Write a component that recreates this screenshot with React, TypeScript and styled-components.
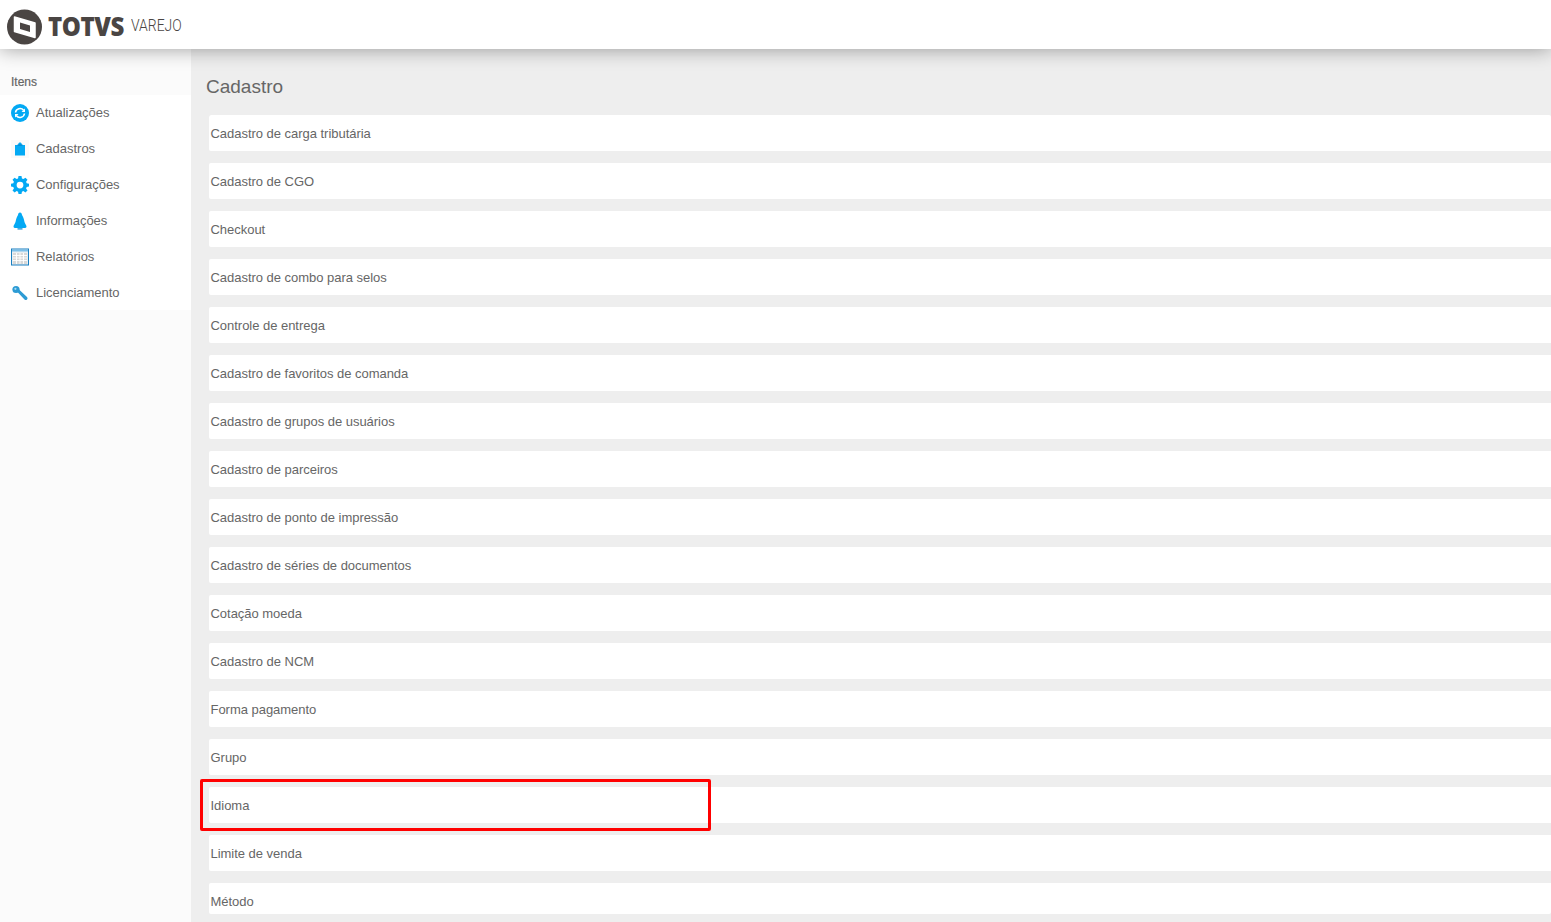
import React from "react";
import styled, { createGlobalStyle } from "styled-components";

const Global = createGlobalStyle`
  html, body { margin: 0; padding: 0; height: 100%; overflow: hidden; }
  body { font-family: "Liberation Sans", Arial, sans-serif; background: #fff; }
`;
const Page = styled.div`
  width: 1551px; height: 922px; display: flex; flex-direction: column; position: relative; overflow: hidden;
`;
const Header = styled.header`
  height: 49px; flex: none; background: #fff; display: flex; align-items: center; padding: 4px 0 0 6px; box-sizing: border-box; gap: 6px;
  box-shadow: 0 0 20px rgba(0,0,0,.38); position: relative; z-index: 2;
`;
const Brand = styled.span`
  font-family: "Open Sans", "Liberation Sans", sans-serif; font-weight: 800; font-size: 27px; letter-spacing: -0.5px; color: #4a4543; line-height: 1; transform: scaleX(.89); transform-origin: left; width: 77px; white-space: nowrap; margin-top: -3px;
`;
const Sub = styled.span`
  font-family: Roboto, "Liberation Sans", sans-serif; font-weight: 300; font-size: 17px; color: #4a4543; transform: scaleX(.82); transform-origin: left; margin-top: -3px;
`;
const Body = styled.div`
  flex: 1; display: flex; min-height: 0;
`;
const Side = styled.aside`
  width: 191px; flex: none; background: #fbfbfb; padding-top: 26px;
`;
const SideTitle = styled.div`
  font-size: 12px; color: #666; height: 20px; line-height: 14px; padding-left: 11px; -webkit-text-stroke: .2px #666;
`;
const SideList = styled.nav`
  background: #fff; height: 215px;
`;
const SideItem = styled.div`
  height: 36px; display: flex; align-items: center; padding-left: 11px; gap: 7px; font-size: 13px; color: #666; letter-spacing: -0.02px;
  & svg { width: 18px; height: 18px; flex: none; }
`;
const SideLabel = styled.span`
  margin-top: -2px;
`;
const Main = styled.main`
  flex: 1; background: #eee; padding: 24px 0 8px 18px; min-width: 0; overflow: hidden; display: flex; flex-direction: column;
`;
const Title = styled.h1`
  margin: 0 0 14px -3px; font-weight: 400; font-size: 19px; line-height: 28px; color: #666;
`;
const Rows = styled.div`
  display: flex; flex-direction: column; gap: 12px; flex: 1; min-height: 0; overflow: hidden; border-radius: 2px;
`;
const Row = styled.div`
  height: 36px; flex: none; background: #fff; border-radius: 2px 0 0 2px; display: flex; align-items: center; padding-left: 1.5px; font-size: 13px; color: #666; letter-spacing: -0.03px;
`;
const Highlight = styled.div`
  position: absolute; left: 200px; top: 779px; width: 511px; height: 52px; box-sizing: border-box; border: 3px solid #f00; border-radius: 2px; z-index: 3;
`;

const B = "#03a9f4";
const Logo = () => (
  <svg width="36" height="36" viewBox="0 0 36 36">
    <circle cx="18.500" cy="18" r="17.500" fill="#4a4543" />
    <path d="M8.500 8L29 14V28.500L8.500 22.500Z" fill="#fff" stroke="#fff" strokeWidth="1.500" strokeLinejoin="round" />
    <path d="M14 13.500L24 16.500V23L14 20Z" fill="#4a4543" />
  </svg>
);
const Refresh = () => (
  <svg viewBox="0 0 18 18">
    <circle cx="9" cy="9" r="9" fill={B} />
    <path d="M4.500 8.500A4.600 4.600 0 0 1 12.600 6.200" fill="none" stroke="#fff" strokeWidth="1.600" />
    <path d="M13.500 9.500A4.600 4.600 0 0 1 5.400 11.800" fill="none" stroke="#fff" strokeWidth="1.600" />
    <path d="M14 4.500V8H10.500Z M4 13.500V10H7.500Z" fill="#fff" />
  </svg>
);
const Clip = () => (
  <svg viewBox="0 0 18 18">
    <rect width="18" height="18" fill="#fafafa" />
    <path d="M4 5H7.200L7.500 3.200C7.800 2.300 10.200 2.300 10.500 3.200L10.800 5H14V15.500H4Z" fill={B} />
    <rect x="6.500" y="4.400" width="5" height="1.300" fill="#0288d1" />
  </svg>
);
const Gear = () => (
  <svg viewBox="0 0 24 24"><path fill={B} fillRule="evenodd" d="M10 0h4l.6 3.300 1.900.8L19.300 2.200 22 5l-1.900 2.700.8 1.900L24 10.200v3.800l-3.100.6-.8 1.900L22 19.200 19.200 22l-2.700-1.900-1.900.8L14 24h-4l-.6-3.100-1.900-.8L4.800 22 2 19.200l1.900-2.700-.8-1.900L0 14v-3.800l3.100-.6.800-1.900L2 5l2.800-2.800 2.700 1.900 1.900-.8zM12 7.500a4.500 4.500 0 1 0 0 9 4.500 4.500 0 0 0 0-9z" /></svg>
);
const Bell = () => (
  <svg viewBox="0 0 18 18">
    <path d="M9 .500C10.300 .500 10.800 1.500 11 3C12.500 5 13 8 13.500 10C14 12 15.500 13 15.500 14.800C15.500 15.600 14.500 16 13 16H5C3.500 16 2.500 15.600 2.500 14.800C2.500 13 4 12 4.500 10C5 8 5.500 5 7 3C7.200 1.500 7.700 .500 9 .500Z" fill={B} />
    <rect x="6.500" y="16.300" width="5" height="1.200" fill="#0288d1" />
  </svg>
);
const Table = () => (
  <svg viewBox="0 0 18 18">
    <rect x=".5" y="1" width="17" height="16" fill="#e8eef2" stroke="#1a7fc0" />
    <rect x="1" y="1.500" width="16" height="2" fill="#7cc0ea" />
    <path d="M2 5H16V16H2Z" fill="#d8d8d8" />
    <path d="M2 7.500H16M2 10H16M2 12.500H16M5.500 5V16M9 5V16M12.500 5V16" stroke="#fff" strokeWidth=".9" />
  </svg>
);
const Wrench = () => (
  <svg viewBox="0 0 18 18">
    <circle cx="5" cy="5.500" r="3.600" fill="#2d9bd4" />
    <path d="M6 7.500L8 5.500L16 13C16.700 13.800 16.700 14.800 16 15.500C15.300 16.200 14.300 16.200 13.500 15.500Z" fill="#2d9bd4" />
    <circle cx="4.400" cy="4.800" r="1.100" fill="#a8dcf5" />
  </svg>
);

const items: [string, React.FC][] = [
  ["Atualizações", Refresh],
  ["Cadastros", Clip],
  ["Configurações", Gear],
  ["Informações", Bell],
  ["Relatórios", Table],
  ["Licenciamento", Wrench],
];
const rows = [
  "Cadastro de carga tributária", "Cadastro de CGO", "Checkout", "Cadastro de combo para selos",
  "Controle de entrega", "Cadastro de favoritos de comanda", "Cadastro de grupos de usuários",
  "Cadastro de parceiros", "Cadastro de ponto de impressão", "Cadastro de séries de documentos",
  "Cotação moeda", "Cadastro de NCM", "Forma pagamento", "Grupo", "Idioma", "Limite de venda", "Método",
];

export default function App() {
  return (
    <Page>
      <Global />
      <Header>
        <Logo />
        <Brand>TOTVS</Brand>
        <Sub>VAREJO</Sub>
      </Header>
      <Body>
        <Side>
          <SideTitle>Itens</SideTitle>
          <SideList>
            {items.map(([label, Icon]) => (
              <SideItem key={label}><Icon /><SideLabel>{label}</SideLabel></SideItem>
            ))}
          </SideList>
        </Side>
        <Main>
          <Title>Cadastro</Title>
          <Rows>{rows.map((r) => <Row key={r}>{r}</Row>)}</Rows>
        </Main>
      </Body>
      <Highlight />
    </Page>
  );
}
